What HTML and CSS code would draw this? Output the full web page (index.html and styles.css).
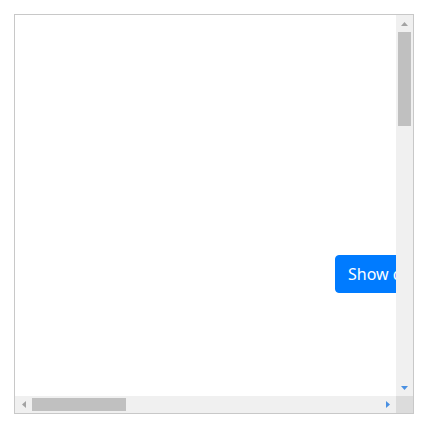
FILE: index.html
```html
<!DOCTYPE html>
<html>
<head>
<meta charset="utf-8">
<link rel="stylesheet" href="styles.css">
</head>
<body>
<div class="frame">
  <div class="viewport">
    <div class="content">
      <button class="btn">Show dialog</button>
    </div>
  </div>
  <div class="vbar">
    <div class="arrow-box"><svg class="tri" width="7" height="4" viewBox="0 0 7 4"><polygon points="3.5,0 7,4 0,4" fill="#a3a3a3"/></svg></div>
    <div class="vthumb"></div>
    <div class="spacer"></div>
    <div class="arrow-box"><svg class="tri" width="7" height="4" viewBox="0 0 7 4"><polygon points="0,0 7,0 3.5,4" fill="#4a90e2"/></svg></div>
  </div>
  <div class="hbar">
    <div class="arrow-box"><svg class="tri" width="4" height="7" viewBox="0 0 4 7"><polygon points="4,0 4,7 0,3.5" fill="#a3a3a3"/></svg></div>
    <div class="hthumb"></div>
    <div class="spacer"></div>
    <div class="arrow-box"><svg class="tri" width="4" height="7" viewBox="0 0 4 7"><polygon points="0,0 4,3.5 0,7" fill="#4a90e2"/></svg></div>
  </div>
  <div class="corner"></div>
</div>
</body>
</html>
```
FILE: styles.css
```css
html, body {
  margin: 0;
  padding: 0;
  background: #ffffff;
}
body {
  padding: 14px;
}
.frame {
  display: grid;
  grid-template-columns: 381px 17px;
  grid-template-rows: 381px 17px;
  width: 398px;
  border: 1px solid #c8c8c8;
}
.viewport {
  overflow: hidden;
  background: #ffffff;
}
.content {
  padding: 240px 0 0 320px;
  white-space: nowrap;
}
.btn {
  display: inline-block;
  margin: 0;
  font-family: "Noto Sans", "Open Sans", sans-serif;
  font-size: 16px;
  line-height: 24px;
  color: #ffffff;
  background: #007bff;
  border: 1px solid #007bff;
  border-radius: 4px;
  padding: 6px 12px;
  white-space: nowrap;
}
.vbar {
  display: flex;
  flex-direction: column;
  align-items: center;
  background: #f0f0f0;
}
.hbar {
  display: flex;
  flex-direction: row;
  align-items: center;
  background: #f0f0f0;
}
.arrow-box {
  width: 17px;
  height: 17px;
  flex: none;
  display: flex;
  align-items: center;
  justify-content: center;
}
.spacer {
  flex: 1;
}
.vthumb {
  width: 13px;
  height: 94px;
  background: #c0c0c0;
  flex: none;
}
.hthumb {
  width: 94px;
  height: 13px;
  background: #c0c0c0;
  flex: none;
}
.corner {
  background: #dcdcdc;
}
.tri {
  display: block;
}
```
